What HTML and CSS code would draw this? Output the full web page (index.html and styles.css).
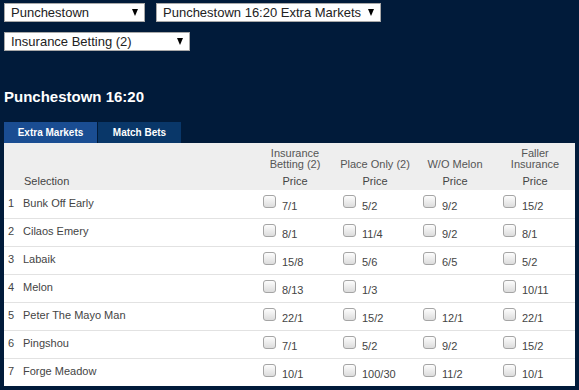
FILE: index.html
```html
<!DOCTYPE html>
<html lang="en">
<head>
    <meta charset="UTF-8">
    <meta name="viewport" content="width=device-width, initial-scale=1.0">
    <title>Punchestown 16:20 - Extra Markets</title>
    <link rel="stylesheet" href="styles.css">
</head>
<body>
    <div class="filters">
        <div class="select-row">
            <div class="select select-meeting">Punchestown</div>
            <div class="select select-race">Punchestown 16:20 Extra Markets</div>
        </div>
        <div class="select-row">
            <div class="select select-market">Insurance Betting (2)</div>
        </div>
    </div>

    <h1 class="race-title">Punchestown 16:20</h1>

    <div class="tabs">
        <a class="tab active" href="#">Extra Markets</a>
        <a class="tab" href="#">Match Bets</a>
    </div>

    <div class="panel">
        <table class="markets">
            <thead>
                <tr>
                    <th class="selection-head">Selection</th>
                    <th class="market-head"><span class="market-name">Insurance<br>Betting (2)</span>Price</th>
                    <th class="market-head"><span class="market-name">Place Only (2)</span>Price</th>
                    <th class="market-head"><span class="market-name">W/O Melon</span>Price</th>
                    <th class="market-head"><span class="market-name">Faller<br>Insurance</span>Price</th>
                </tr>
            </thead>
            <tbody id="runners"></tbody>
        </table>
    </div>

    <script>
        const runners = [
            ['Bunk Off Early', '7/1', '5/2', '9/2', '15/2'],
            ['Cilaos Emery', '8/1', '11/4', '9/2', '8/1'],
            ['Labaik', '15/8', '5/6', '6/5', '5/2'],
            ['Melon', '8/13', '1/3', '', '10/11'],
            ['Peter The Mayo Man', '22/1', '15/2', '12/1', '22/1'],
            ['Pingshou', '7/1', '5/2', '9/2', '15/2'],
            ['Forge Meadow', '10/1', '100/30', '11/2', '10/1']
        ];

        const body = document.getElementById('runners');

        runners.forEach((runner, index) => {
            const prices = runner.slice(1).map(price => {
                if (!price) return '<td class="price"></td>';
                return `<td class="price"><label><input type="checkbox"><span>${price}</span></label></td>`;
            }).join('');

            body.insertAdjacentHTML('beforeend', `
                <tr>
                    <td class="runner"><span class="num">${index + 1}</span>${runner[0]}</td>
                    ${prices}
                </tr>
            `);
        });
    </script>
</body>
</html>
```

FILE: styles.css
```css
html, body {
    margin: 0;
    background-color: #011b3a;
}

body {
    padding: 3px 4px 4px;
    font-family: "Liberation Sans", Arial, sans-serif;
}

.filters {
    display: flex;
    flex-direction: column;
    gap: 10px;
}

.select-row {
    display: flex;
    gap: 11px;
}

.select {
    position: relative;
    box-sizing: border-box;
    height: 19px;
    padding: 0 20px 0 6px;
    background-color: #fff;
    border: 1px solid #a9a9a9;
    color: #222;
    font-size: 13px;
    line-height: 17px;
    white-space: nowrap;
}

.select::after {
    content: "";
    position: absolute;
    right: 6px;
    top: 5px;
    border-left: 3.5px solid transparent;
    border-right: 3.5px solid transparent;
    border-top: 7px solid #000;
}

.select-meeting {
    width: 141px;
}

.select-race {
    width: 225px;
}

.select-market {
    width: 186px;
}

.race-title {
    margin: 37px 0 0;
    color: #fff;
    font-size: 15px;
    font-weight: bold;
    line-height: 18px;
}

.tabs {
    display: flex;
    gap: 1px;
    margin-top: 16px;
}

.tab {
    display: block;
    height: 21px;
    line-height: 21px;
    width: 83px;
    text-align: center;
    background-color: #093769;
    color: #fff;
    font-size: 10px;
    font-weight: bold;
    text-decoration: none;
}

.tab.active {
    width: 93px;
    background-color: #1a4d92;
}

.panel {
    width: 571px;
    background-color: #fff;
}

.markets {
    width: 100%;
    border-collapse: collapse;
    table-layout: fixed;
    color: #444;
    font-size: 11px;
}

.markets thead tr {
    background-color: #eeeeee;
    height: 47px;
}

.markets th {
    font-weight: normal;
    vertical-align: bottom;
    padding: 0 0 3px;
}

.selection-head {
    text-align: left;
    padding-left: 20px !important;
    width: 231px;
}

.market-head {
    width: 80px;
    text-align: center;
    line-height: 11px;
    font-size: 11px;
}

.market-name {
    display: block;
    margin-bottom: 6px;
    color: #555;
}

.markets tbody tr {
    height: 28px;
    border-top: 1px solid #e2e2e2;
}

.markets tbody tr:first-child {
    border-top: none;
}

.runner {
    padding: 0 0 2px 4px;
    font-size: 11px;
    color: #444;
}

.num {
    display: inline-block;
    width: 15px;
}

.price label {
    display: flex;
    align-items: center;
    gap: 6px;
    padding-left: 7px;
}

.price input {
    appearance: none;
    margin: 0;
    width: 13px;
    height: 13px;
    border: 1px solid #a5a5a5;
    border-radius: 3px;
    background: linear-gradient(#fdfdfd, #dcdcdc);
    position: relative;
    top: -2px;
}

.price span {
    position: relative;
    top: 2px;
}
```
